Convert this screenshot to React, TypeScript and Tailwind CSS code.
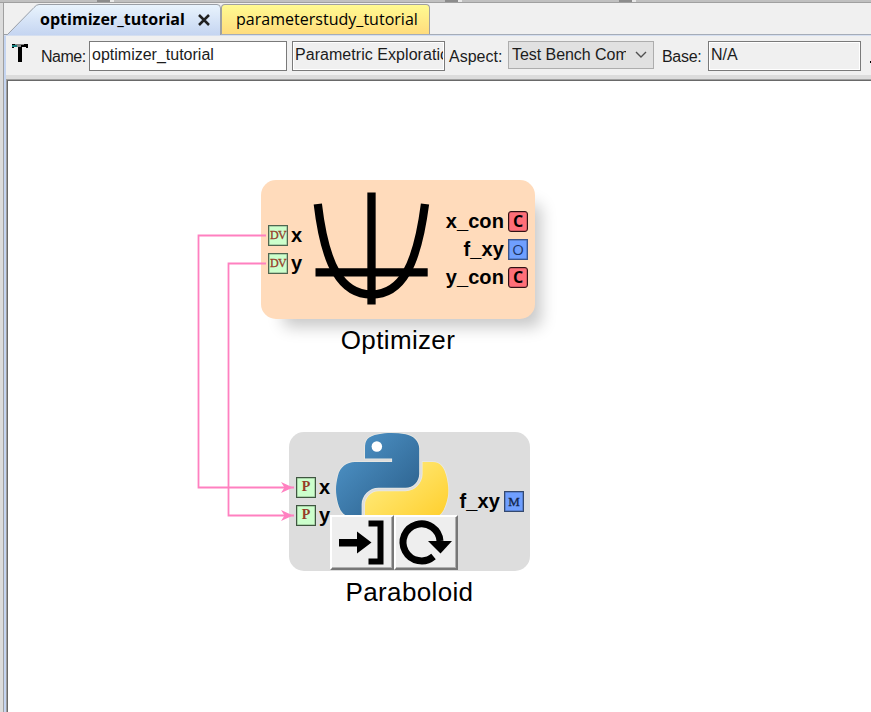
import React from "react";

type PortKind = "DV" | "P" | "C" | "O" | "M";

const sans = "font-['Liberation_Sans',Arial,sans-serif]";
const ui = "font-['Open_Sans','Noto_Sans',sans-serif]";

const portStyle: Record<PortKind, string> = {
  DV: "border-[#4f6650] bg-[#ccffcc] text-[#963c28] text-[12px] tracking-[-0.6px] font-['Liberation_Serif',serif] [-webkit-text-stroke:0.3px]",
  P: "border-[#3f5640] bg-[#ccffcc] text-[#963c28] text-[14px] font-bold font-['Liberation_Serif',serif]",
  C: "border-[#301014] rounded-[3px] bg-[#ff6f78] text-black text-[16px] font-bold font-['Open_Sans',sans-serif]",
  O: "border-[#3a558c] bg-[#6f9fff] text-[#1c3565] text-[15px] font-['Open_Sans',sans-serif]",
  M: "border-[#34496f] bg-[#6f9fff] text-[#14284e] text-[13px] font-['Liberation_Serif',serif] [-webkit-text-stroke:0.3px]",
};

function Port({ kind }: { kind: PortKind }) {
  return (
    <span className={`mb-px flex h-[21px] w-5 shrink-0 items-center justify-center border-[1.5px] leading-none shadow-[inset_0_0_0_0.5px_rgba(0,0,0,0.35)] ${portStyle[kind]}`}>
      {kind}
    </span>
  );
}

function PortRow({ kind, label, side }: { kind: PortKind; label: string; side: "left" | "right" }) {
  return (
    <div className={`flex h-7 items-center justify-end ${side === "left" ? "gap-[3px]" : "gap-1"}`}>
      {side === "left" && <Port kind={kind} />}
      <span className={`relative -top-px text-[20px] leading-none font-bold tracking-[0.1px] whitespace-nowrap ${sans}`}>{label}</span>
      {side === "right" && <Port kind={kind} />}
    </div>
  );
}

function Parabola() {
  return (
    <svg className="ml-[7px] h-[120px] w-[120px] shrink-0" viewBox="311 190 120 120" fill="none" stroke="#000" strokeWidth="8.3">
      <path d="M371.5 192.5V304.5M315.5 272.3H427.7" />
      <path d="M317.8 204C325 265 341 294.5 371.5 294.5S417 265 425 204" />
    </svg>
  );
}

function PythonLogo() {
  return (
    <svg className="ml-1.5 block h-[83px] w-[113px]" viewBox="0 -1 111.8 82.1">
      <defs>
        <linearGradient id="blue" x1="0" y1="0" x2="1" y2="1">
          <stop offset="0" stopColor="#5299ce" />
          <stop offset="1" stopColor="#285b86" />
        </linearGradient>
        <linearGradient id="yellow" x1="0" y1="0" x2="0.8" y2="1">
          <stop offset="0" stopColor="#fff08a" />
          <stop offset="1" stopColor="#ffcb22" />
        </linearGradient>
      </defs>
      <g stroke="#e9e9e4" strokeWidth="1.5" paintOrder="stroke">
        <path
          fill="url(#yellow)"
          d="M85.64 28.66V40.56C85.64 49.79 77.81 57.56 68.89 57.56H42.1C34.77 57.56 28.7 63.84 28.7 71.19V96.7C28.7 104 35 108 42.1 109H69C76 108 82.3 104 82.3 96.7V86.5H55.5V83.1H95.7C103.5 83.1 106.4 77.66 109.1 69.5C111.9 61.1 111.78 53 109.1 42.25C107.18 34.5 103.5 28.66 95.7 28.66Z"
        />
        <path
          fill="url(#blue)"
          d="M54.9 0C50.3 0 45.96.4 42.1 1.1C30.76 3.1 28.7 7.3 28.7 15V25.25H55.5V28.66H18.64C10.85 28.66 4 33.34 1.89 42.25C-.57 52.46-.68 58.84 1.89 69.5C3.8 77.4 8.35 83.1 16.14 83.1H25.36V70.84C25.36 62 33 54.19 42.1 54.19H68.89C76.34 54.19 82.3 48 82.3 40.56V15C82.3 7.77 76.16 2.3 68.89 1.1C64.28.33 59.5 0 54.9 0Z"
        />
      </g>
      <circle cx="40.4" cy="13.3" r="5.2" fill="#fff" />
    </svg>
  );
}

function ToolButton({ children }: { children: React.ReactNode }) {
  return (
    <button className="h-[55px] w-16 border-2 border-t-white border-r-[#777] border-b-[#777] border-l-white bg-[#eee] shadow-[inset_-1px_-1px_0_#b0b0b0]">
      {children}
    </button>
  );
}

function Field({ className, children }: { className: string; children: React.ReactNode }) {
  return (
    <div className={`h-[30px] overflow-hidden border border-[#7a7a7a] pt-[3px] pl-0.5 text-[16px] leading-5 whitespace-nowrap ${className}`}>
      {children}
    </div>
  );
}

export default function App() {
  return (
    <div className={`flex h-[712px] w-[871px] flex-col overflow-hidden bg-[#f0f0f0] text-black ${sans}`}>
      <div className="flex h-[3px] shrink-0 border-b border-[#a0a0a0] bg-[#c0c0c0]">
        <i className="ml-[97px] h-0.5 w-[13px] bg-[#8c8c8c]" />
        <i className="h-0.5 w-1 bg-[#e8e8e8]" />
        <i className="ml-[331px] h-0.5 w-[13px] bg-[#8c8c8c]" />
        <i className="h-0.5 w-1 bg-[#e8e8e8]" />
        <i className="ml-[157px] h-0.5 w-[13px] bg-[#8c8c8c]" />
        <i className="h-0.5 w-1 bg-[#e8e8e8]" />
      </div>
      <div className="flex min-h-0 flex-1">
        <div className="w-1 shrink-0 border-r border-[#a0a0a0] bg-[#dcdcdc]" />
        <div className="flex min-w-0 flex-1 flex-col">
          <div className={`flex h-8 shrink-0 border-b border-[#a5acb8] ${ui}`}>
            <div className="relative h-8 w-[217px]">
              <svg className="absolute inset-0 h-8 w-[217px]" viewBox="4 3 217 32">
                <defs>
                  <linearGradient id="tab" x1="0" y1="0" x2="0" y2="1">
                    <stop offset="0" stopColor="#e9f4fd" />
                    <stop offset="1" stopColor="#c5d5f1" />
                  </linearGradient>
                </defs>
                <path d="M7 35L34 7Q36 4.500 39 4.500H217Q220.500 4.500 220.500 8V35Z" fill="url(#tab)" />
                <path d="M4 34.500H7.500L34 7.500Q36.500 4.500 39 4.500H217Q220.500 4.500 220.500 8V35" fill="none" stroke="#9a9fa6" />
              </svg>
              <div className="relative flex h-8 items-center pl-9">
                <span className="w-[146px] text-[16px] leading-8 font-bold tracking-[0.02px] whitespace-nowrap">optimizer_tutorial</span>
                <svg className="mt-0.5 ml-3 h-3 w-3" viewBox="0 0 12 12">
                  <path d="M1 1L11 11M11 1L1 11" stroke="#202020" strokeWidth="2.5" />
                </svg>
              </div>
            </div>
            <div className="mt-px h-[30px] w-[209px] rounded-t-[4px] border border-b-0 border-[#a0a0a0] bg-linear-to-b from-[#fffa91] to-[#ffdc7d] pl-3.5 text-[16px] leading-[29px] tracking-[0.02px] whitespace-nowrap">
              parameterstudy_tutorial
            </div>
          </div>
          <div className="flex min-h-0 flex-1 border-t border-[#d5dff0]">
            <div className="w-0.5 shrink-0 bg-[#c5d5f1]" />
            <div className="flex min-w-0 flex-1 flex-col">
              <div className="flex h-[39px] shrink-0 items-start pt-[5px] text-[16px] leading-5 text-[#1c1c1c]">
                <svg className="mt-[3px] ml-1.5 h-[18px] w-4 shrink-0" viewBox="0 0 16 18" shapeRendering="crispEdges">
                  <path d="M0 0H16V4H14V3H10V18H6V3H2V4H0Z" fill="#000" />
                  <path d="M0 1H7V3H0Z" fill="#168080" />
                  <path d="M3 0H12V1H9V3H5V1H3Z" fill="#858585" />
                </svg>
                <span className="mt-1.5 ml-[13px] w-12 shrink-0 tracking-[-0.5px] whitespace-nowrap">Name:</span>
                <Field className="w-[198px] shrink-0 bg-white">optimizer_tutorial</Field>
                <Field className="ml-[5px] w-[153px] shrink-0 shadow-[inset_0_0_0_1px_white]">
                  <span className="block w-[148px] overflow-hidden tracking-[0.05px]">Parametric Exploratic</span>
                </Field>
                <span className="mt-1.5 ml-1 w-[59px] shrink-0 whitespace-nowrap">Aspect:</span>
                <div className="flex h-7 w-[146px] shrink-0 items-center border border-[#adadad] bg-[#e1e1e1] pl-[3px]">
                  <span className="w-[114px] overflow-hidden tracking-[-0.05px] whitespace-nowrap">Test Bench Com</span>
                  <svg className="ml-[9px] h-2 w-3" viewBox="0 0 12 8">
                    <path d="M1 1L6 6L11 1" fill="none" stroke="#505050" strokeWidth="1.4" />
                  </svg>
                </div>
                <span className="mt-1.5 ml-2 w-[46px] shrink-0 tracking-[-0.3px] whitespace-nowrap">Base:</span>
                <Field className="w-[153px] shrink-0 shadow-[inset_0_0_0_1px_white]">N/A</Field>
                <i className="mt-5 ml-[9px] h-0.5 w-1 bg-black" />
              </div>
              <div className="h-1 shrink-0 bg-[#dcdcdc]" />
              <div className="min-h-0 flex-1 border-t border-l border-[#a0a0a0]">
                <main className="relative h-full border-t border-l border-[#696969] bg-white">
                  <section className="absolute top-[99px] left-[253px] w-[274px]">
                    <div className="flex h-[139px] items-center rounded-[15px] bg-[#ffdbbb] pl-[7px] shadow-[14px_16px_16px_-8px_rgba(0,0,0,0.22)]">
                      <div className="flex w-9 flex-col items-start">
                        <PortRow kind="DV" label="x" side="left" />
                        <PortRow kind="DV" label="y" side="left" />
                      </div>
                      <Parabola />
                      <div className="mr-[7px] ml-auto">
                        <PortRow kind="C" label="x_con" side="right" />
                        <PortRow kind="O" label="f_xy" side="right" />
                        <PortRow kind="C" label="y_con" side="right" />
                      </div>
                    </div>
                    <h2 className="relative mt-[5px] text-center text-[26px] leading-8 tracking-[0.35px]">Optimizer</h2>
                  </section>
                  <section className="absolute top-[351px] left-[281px] w-[241px]">
                    <div className="flex h-[139px] items-center rounded-[15px] bg-[#dddddd] pl-[7px]">
                      <div className="flex w-[34px] shrink-0 flex-col items-start">
                        <PortRow kind="P" label="x" side="left" />
                        <PortRow kind="P" label="y" side="left" />
                      </div>
                      <div className="w-32 shrink-0 self-start">
                        <PythonLogo />
                        <div className="flex">
                          <ToolButton>
                            <svg className="h-[51px] w-[60px]" viewBox="332 517 60 51">
                              <path d="M339 539H357V531.500L371.500 542.500L357 553.500V546.500H339Z" />
                              <path d="M368.500 523.500H380.500V561.500H368.500" fill="none" stroke="#000" strokeWidth="6" />
                            </svg>
                          </ToolButton>
                          <ToolButton>
                            <svg className="h-[51px] w-[60px]" viewBox="396 517 60 51">
                              <path d="M433.500 556.500A18.500 18.500 0 1 1 440 541" fill="none" stroke="#000" strokeWidth="7" />
                              <path d="M428 541H452L440.500 553.500Z" />
                            </svg>
                          </ToolButton>
                        </div>
                      </div>
                      <div className="mr-1.5 ml-auto">
                        <PortRow kind="M" label="f_xy" side="right" />
                      </div>
                    </div>
                    <h2 className="mt-[5px] text-center text-[26px] leading-8 tracking-[0.35px]">Paraboloid</h2>
                  </section>
                  <svg className="pointer-events-none absolute top-0 left-0 h-[631px] w-[863px]" viewBox="8 81 863 631" fill="none">
                    <path d="M266 235.500H198.500V487.500H294M266 263.500H228.500V515.500H294" stroke="#ff80c0" strokeWidth="1.8" />
                    <path d="M281 482L293 487.500L281 493L284.500 487.500ZM281 510L293 515.500L281 521L284.500 515.500Z" fill="#ff80c0" />
                  </svg>
                </main>
              </div>
            </div>
          </div>
        </div>
      </div>
    </div>
  );
}
